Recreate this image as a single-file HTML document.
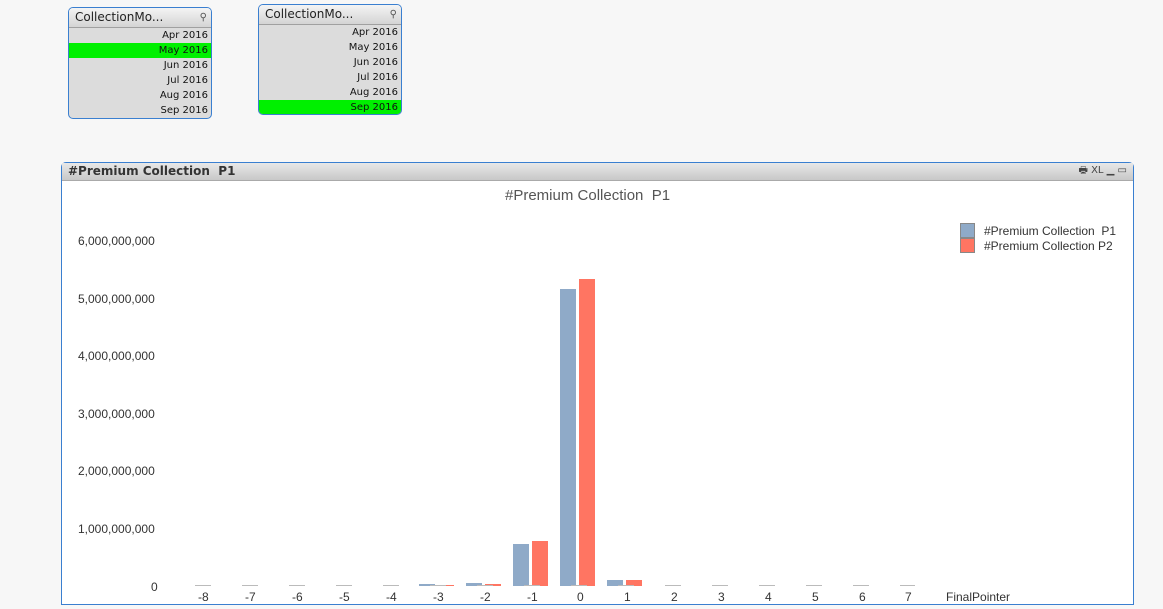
<!DOCTYPE html><html><head><style>
*{box-sizing:border-box}
body{margin:0;width:1163px;height:609px;background:#f7f7f7;position:relative;overflow:hidden;font-family:"DejaVu Sans","Liberation Sans",sans-serif;}
.lb{position:absolute;border:1px solid #3a7fd0;border-radius:5px;background:#dcdcdc;overflow:hidden}
.lb .h{height:20px;background:linear-gradient(#f4f4f4,#d4d4d4);border-bottom:1px solid #a0a0a0;font-size:12px;color:#222;padding-left:6px;line-height:19px;position:relative}
.lb .h span{position:absolute;right:4px;top:0;font-size:10px;font-weight:normal;color:#555}
.lb .r{height:15px;font-size:10px;text-align:right;padding-right:3px;line-height:15px;color:#111}
.g{background:#00f000}
.ch{position:absolute;left:61px;top:162px;width:1073px;height:443px;border:1px solid #3a7fd0;border-radius:5px 5px 0 0;background:#fff}
.ch .h{height:18px;background:linear-gradient(#e8e8e8,#c8c8c8);border-bottom:1px solid #aaa;font-size:12px;font-weight:bold;color:#333;padding-left:6px;line-height:16px}
.t{position:absolute;font-size:11px;color:#333;font-family:"Liberation Sans",sans-serif}
.b{position:absolute;width:16px}
.bl{background:#8faac8}.rd{background:#ff7562}
</style></head><body>
<div class="lb" style="left:68px;top:7px;width:144px;height:112px"><div class="h">CollectionMo...<span>⚲</span></div>
<div class="r">Apr 2016</div><div class="r g">May 2016</div><div class="r">Jun 2016</div><div class="r">Jul 2016</div><div class="r">Aug 2016</div><div class="r">Sep 2016</div></div>
<div class="lb" style="left:258px;top:4px;width:144px;height:111px"><div class="h">CollectionMo...<span>⚲</span></div>
<div class="r">Apr 2016</div><div class="r">May 2016</div><div class="r">Jun 2016</div><div class="r">Jul 2016</div><div class="r">Aug 2016</div><div class="r g">Sep 2016</div></div>
<div class="ch"><div class="h">#Premium Collection &nbsp;P1<span style="position:absolute;right:6px;top:0;font-weight:normal;font-size:10px;color:#444">🖶 XL ▁ ▭</span></div></div>
<div class="t" style="left:505px;top:187px;font-size:15px;color:#555">#Premium Collection &nbsp;P1</div>
<div style="position:absolute;left:960px;top:223px;width:15px;height:15px;background:#8faac8;border:1px solid #888"></div>
<div style="position:absolute;left:960px;top:238px;width:15px;height:15px;background:#ff7562;border:1px solid #888"></div>
<div class="t" style="left:984px;top:224px;font-size:12px">#Premium Collection &nbsp;P1</div>
<div class="t" style="left:984px;top:239px;font-size:12px">#Premium Collection P2</div>
<div class="t" style="left:78px;top:234px;font-size:12px">6,000,000,000</div>
<div class="t" style="left:78px;top:292px;font-size:12px">5,000,000,000</div>
<div class="t" style="left:78px;top:349px;font-size:12px">4,000,000,000</div>
<div class="t" style="left:78px;top:407px;font-size:12px">3,000,000,000</div>
<div class="t" style="left:78px;top:464px;font-size:12px">2,000,000,000</div>
<div class="t" style="left:78px;top:522px;font-size:12px">1,000,000,000</div>
<div class="t" style="left:151px;top:580px;font-size:12px">0</div>
<div class="b bl" style="left:513px;top:544px;height:42px"></div><div class="b rd" style="left:532px;top:541px;height:45px"></div>
<div class="b bl" style="left:560px;top:289px;height:297px"></div><div class="b rd" style="left:579px;top:279px;height:307px"></div>
<div class="b bl" style="left:607px;top:580px;height:6px"></div><div class="b rd" style="left:626px;top:580px;height:6px"></div>
<div class="b bl" style="left:466px;top:583px;height:3px"></div><div class="b rd" style="left:485px;top:584px;height:2px"></div>
<div class="b bl" style="left:419px;top:584px;height:2px"></div><div class="b rd" style="left:438px;top:585px;height:1px"></div>
<div style="position:absolute;left:195px;top:585px;width:720px;height:1px;background:repeating-linear-gradient(90deg,#bbb 0 16px,transparent 16px 47px)"></div>
<div class="t" style="left:198px;top:590px;font-size:12px">-8</div><div class="t" style="left:245px;top:590px;font-size:12px">-7</div><div class="t" style="left:292px;top:590px;font-size:12px">-6</div><div class="t" style="left:339px;top:590px;font-size:12px">-5</div><div class="t" style="left:386px;top:590px;font-size:12px">-4</div><div class="t" style="left:433px;top:590px;font-size:12px">-3</div><div class="t" style="left:480px;top:590px;font-size:12px">-2</div><div class="t" style="left:527px;top:590px;font-size:12px">-1</div><div class="t" style="left:577px;top:590px;font-size:12px">0</div><div class="t" style="left:624px;top:590px;font-size:12px">1</div><div class="t" style="left:671px;top:590px;font-size:12px">2</div><div class="t" style="left:718px;top:590px;font-size:12px">3</div><div class="t" style="left:765px;top:590px;font-size:12px">4</div><div class="t" style="left:812px;top:590px;font-size:12px">5</div><div class="t" style="left:859px;top:590px;font-size:12px">6</div><div class="t" style="left:905px;top:590px;font-size:12px">7</div>
<div class="t" style="left:946px;top:590px;font-size:12px">FinalPointer</div>
</body></html>
